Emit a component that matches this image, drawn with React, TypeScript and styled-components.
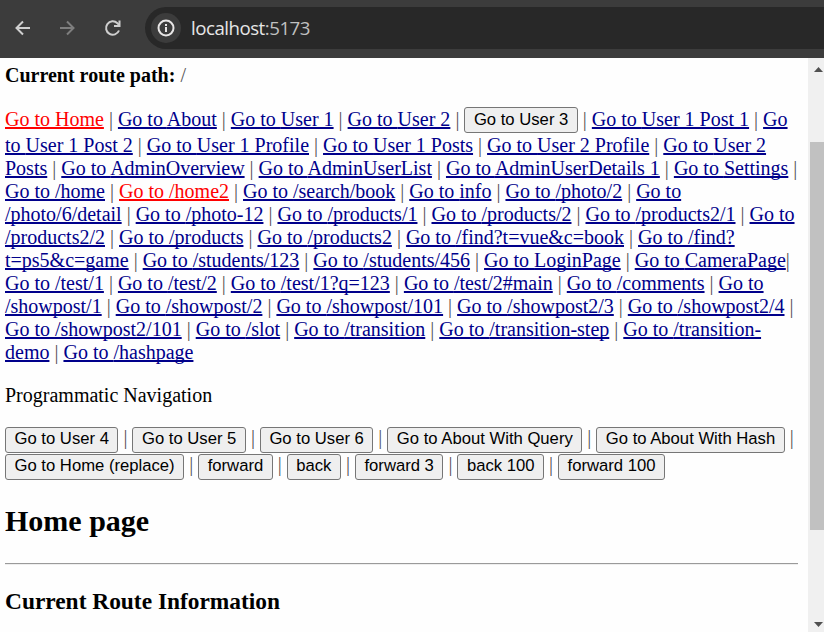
import React, { Fragment } from "react";
import styled, { createGlobalStyle } from "styled-components";

const GlobalStyle = createGlobalStyle`
  body { margin: 0; background: #fefefe; overflow: hidden; }
`;

const Browser = styled.div`
  display: flex;
  flex-direction: column;
  width: 824px;
  height: 632px;
  overflow: hidden;
  background: #fefefe;
`;

const Toolbar = styled.header`
  display: flex;
  align-items: center;
  flex: none;
  height: 58px;
  box-sizing: border-box;
  padding: 0 0 2px 13px;
  background: #3c3c3c;
`;

const NavButton = styled.span<{ $dim?: boolean }>`
  display: flex;
  width: 20px;
  height: 20px;
  margin-right: 25px;
  color: ${(p) => (p.$dim ? "#7e7e7e" : "#cfcfcf")};
`;

const AddressBar = styled.div`
  display: flex;
  align-items: center;
  flex: 1;
  height: 42px;
  margin-left: -3px;
  padding-left: 6px;
  border-radius: 21px 0 0 21px;
  background: #282828;
`;

const InfoBadge = styled.span`
  display: flex;
  align-items: center;
  justify-content: center;
  width: 30px;
  height: 30px;
  border-radius: 50%;
  background: #3c3c3c;
  color: #e8e6e6;
`;

const Address = styled.span`
  margin-left: 10px;
  font: 18.7px/26px "Open Sans", "Noto Sans", sans-serif;
  letter-spacing: -0.5px;
  color: #e6e6e6;
`;

const Port = styled.span`
  color: #c0c0c0;
`;

const Viewport = styled.div`
  display: flex;
  flex: 1;
  min-height: 0;
`;

const Page = styled.main`
  flex: 1;
  overflow: hidden;
  padding: 6px 10px 0 5px;
  font: 20px/23px "Liberation Serif", "Times New Roman", serif;
  color: #000;
`;

const Paragraph = styled.p`
  margin: 0 0 20px;
`;

const RouteLink = styled.a<{ $active?: boolean }>`
  color: ${(p) => (p.$active ? "#ff0000" : "#00008b")};
  text-decoration: underline;
  text-decoration-thickness: 2px;
  text-decoration-skip-ink: none;
  text-underline-offset: 1px;
  cursor: pointer;
`;

const Separator = styled.span`
  color: #555;
`;

const ActionButton = styled.button`
  height: 26px;
  box-sizing: border-box;
  margin: 0;
  padding: 0 8.5px 2px;
  border: 1px solid #767676;
  border-radius: 3px;
  background: #efefef;
  color: #000;
  font: 16.667px/19px "Liberation Sans", Arial, sans-serif;
`;

const InlineButton = styled(ActionButton)`
  margin-bottom: 1px;
  vertical-align: 1px;
`;

const ActionRow = styled.div`
  height: 27px;
  line-height: 23px;
  white-space: nowrap;
`;

const ButtonRows = styled.div`
  height: 53px;
  margin-top: -1px;
`;

const PageTitle = styled.h2`
  margin: 25px 0;
  font-size: 30px;
  line-height: 34px;
`;

const Divider = styled.hr`
  height: 0;
  margin: 0 0 23px;
  border: 0 solid;
  border-width: 1px 0;
  border-color: #9a9a9a #eeeeee #eeeeee #9a9a9a;
`;

const SectionTitle = styled.h3`
  margin: 0;
  font-size: 23.4px;
  line-height: 27px;
`;

const ScrollTrack = styled.div`
  display: flex;
  flex-direction: column;
  align-items: flex-end;
  flex: none;
  width: 16px;
  background: #f0f0f0;
`;

const ScrollArrow = styled.span`
  display: flex;
  width: 10px;
  height: 5px;
  margin: 9px 0 0;
`;

const ScrollThumb = styled.div`
  width: 14px;
  height: 388px;
  margin: 70px 0 83px;
  background: #c1c1c1;
`;

type NavItem = { label: string; active?: boolean; button?: boolean; tight?: boolean };

const link = (label: string): NavItem => ({ label });

const routes: NavItem[] = [
  { label: "Home", active: true },
  ...["About", "User 1", "User 2"].map(link),
  { label: "User 3", button: true },
  ...[
    "User 1 Post 1", "User 1 Post 2", "User 1 Profile", "User 1 Posts",
    "User 2 Profile", "User 2 Posts", "AdminOverview", "AdminUserList",
    "AdminUserDetails 1", "Settings", "/home",
  ].map(link),
  { label: "/home2", active: true },
  ...[
    "/search/book", "info", "/photo/2", "/photo/6/detail", "/photo-12",
    "/products/1", "/products/2", "/products2/1", "/products2/2",
    "/products", "/products2", "/find?t=vue&c=book", "/find?t=ps5&c=game",
    "/students/123", "/students/456", "LoginPage",
  ].map(link),
  { label: "CameraPage", tight: true },
  ...[
    "/test/1", "/test/2", "/test/1?q=123", "/test/2#main", "/comments",
    "/showpost/1", "/showpost/2", "/showpost/101", "/showpost2/3",
    "/showpost2/4", "/showpost2/101", "/slot", "/transition",
    "/transition-step", "/transition-demo", "/hashpage",
  ].map(link),
];

const actionRows = [
  ["Go to User 4", "Go to User 5", "Go to User 6", "Go to About With Query", "Go to About With Hash"],
  ["Go to Home (replace)", "forward", "back", "forward 3", "back 100", "forward 100"],
];

const BackIcon = () => (
  <svg width="20" height="20" viewBox="0 0 20 20" fill="none" stroke="currentColor" strokeWidth="2">
    <path d="M17 10H4M10 3.5L3.5 10L10 16.5" />
  </svg>
);

const ForwardIcon = () => (
  <svg width="20" height="20" viewBox="0 0 20 20" fill="none" stroke="currentColor" strokeWidth="2">
    <path d="M2 10H15M9 3.5L15.5 10L9 16.5" />
  </svg>
);

const ReloadIcon = () => (
  <svg width="20" height="20" viewBox="0 0 20 20" fill="none" stroke="currentColor" strokeWidth="2">
    <path d="M16 12.5A6.7 6.7 0 1 1 14.4 5.2L16 7" />
    <path d="M16.5 2.5V8H11" />
  </svg>
);

const InfoIcon = () => (
  <svg width="18" height="18" viewBox="0 0 18 18" fill="none" stroke="currentColor" strokeWidth="2">
    <circle cx="9" cy="9" r="7.5" />
    <path d="M9 8V13M9 5V7" />
  </svg>
);

export default function App() {
  return (
    <Browser>
      <GlobalStyle />
      <Toolbar>
        <NavButton><BackIcon /></NavButton>
        <NavButton $dim><ForwardIcon /></NavButton>
        <NavButton><ReloadIcon /></NavButton>
        <AddressBar>
          <InfoBadge><InfoIcon /></InfoBadge>
          <Address>localhost<Port>:5173</Port></Address>
        </AddressBar>
      </Toolbar>
      <Viewport>
        <Page>
          <Paragraph><b>Current route path:</b> <Separator>/</Separator></Paragraph>
          <Paragraph>
            {routes.map((item, i) => (
              <Fragment key={item.label}>
                {item.button ? (
                  <InlineButton>Go to {item.label}</InlineButton>
                ) : (
                  <RouteLink $active={item.active}>Go to {item.label}</RouteLink>
                )}
                {i < routes.length - 1 && <Separator>{item.tight ? "| " : " | "}</Separator>}
              </Fragment>
            ))}
          </Paragraph>
          <Paragraph>Programmatic Navigation</Paragraph>
          <ButtonRows>
            {actionRows.map((row, r) => (
              <ActionRow key={r}>
                {row.map((label, i) => (
                  <Fragment key={label}>
                    <ActionButton>{label}</ActionButton>
                    {(r === 0 || i < row.length - 1) && <Separator> | </Separator>}
                  </Fragment>
                ))}
              </ActionRow>
            ))}
          </ButtonRows>
          <PageTitle>Home page</PageTitle>
          <Divider />
          <SectionTitle>Current Route Information</SectionTitle>
        </Page>
        <ScrollTrack>
          <ScrollArrow>
            <svg width="10" height="5" viewBox="0 0 10 5"><path d="M0 5L4.5 0L9 5Z" fill="#505050" /></svg>
          </ScrollArrow>
          <ScrollThumb />
          <ScrollArrow>
            <svg width="10" height="5" viewBox="0 0 10 5"><path d="M0 0L4.5 5L9 0Z" fill="#505050" /></svg>
          </ScrollArrow>
        </ScrollTrack>
      </Viewport>
    </Browser>
  );
}
